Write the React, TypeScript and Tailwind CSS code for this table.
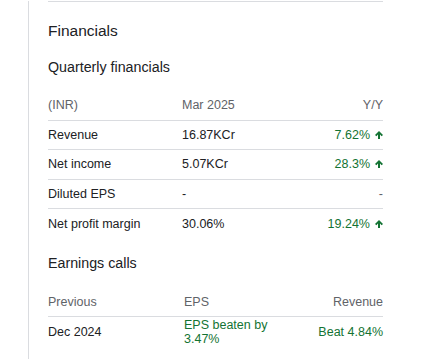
import React from "react";

function Up() {
  return (
    <svg viewBox="0 0 8 8" className="w-[8px] h-[8px] ml-[5px] inline-block" fill="#137333">
      <path d="M4 0 L8 4 L6.6 5.2 L5 3.6 V8 H3 V3.6 L1.4 5.2 L0 4 Z" />
    </svg>
  );
}

const rows = [
  { label: "Revenue", value: "16.87KCr", change: "7.62%", up: true },
  { label: "Net income", value: "5.07KCr", change: "28.3%", up: true },
  { label: "Diluted EPS", value: "-", change: "-", up: false },
  { label: "Net profit margin", value: "30.06%", change: "19.24%", up: true },
];

export default function App() {
  return (
    <div
      className="w-[428px] h-[359px] bg-white overflow-hidden text-[#202124]"
      style={{ fontFamily: '"Liberation Sans", Arial, sans-serif' }}
    >
      <div className="ml-[28px] h-full w-[355px] border-l border-[#dadce0] pl-[19px]">
        <div className="mt-px border-t border-[#dadce0]">
          <div className="mt-[19px] text-[15.5px] leading-[20px]">Financials</div>
          <div className="mt-[16.4px] text-[14.25px] leading-[20px]">Quarterly financials</div>

          <div className="text-[12.5px] leading-[16px]">
            <div className="mt-[19.8px] grid grid-cols-[134px_1fr_auto] pb-[6.8px] border-b border-[#dadce0] text-[#5f6368]">
              <div>(INR)</div>
              <div>Mar 2025</div>
              <div className="text-right">Y/Y</div>
            </div>
            {rows.map((r, i) => (
              <div
                key={r.label}
                className={
                  "grid grid-cols-[134px_1fr_auto] items-center h-[29.3px] " +
                  (i < rows.length - 1 ? "border-b border-[#dadce0]" : "")
                }
              >
                <div>{r.label}</div>
                <div>{r.value}</div>
                <div className={"flex items-center justify-end " + (r.up ? "text-[#137333]" : "text-[#5f6368]")}>
                  <span>{r.change}</span>
                  {r.up && <Up />}
                </div>
              </div>
            ))}
          </div>

          <div className="mt-[15.2px] text-[14.25px] leading-[20px]">Earnings calls</div>

          <div className="text-[12.5px]">
            <div className="mt-[20.3px] grid grid-cols-[136px_100px_1fr] leading-[16px] pb-[6px] border-b border-[#dadce0] text-[#5f6368]">
              <div>Previous</div>
              <div>EPS</div>
              <div className="text-right">Revenue</div>
            </div>
            <div className="grid grid-cols-[136px_100px_1fr] items-center leading-[14px] py-[1.3px]">
              <div>Dec 2024</div>
              <div className="text-[#137333]">EPS beaten by 3.47%</div>
              <div className="text-right text-[#137333]">Beat 4.84%</div>
            </div>
          </div>
        </div>
      </div>
    </div>
  );
}
